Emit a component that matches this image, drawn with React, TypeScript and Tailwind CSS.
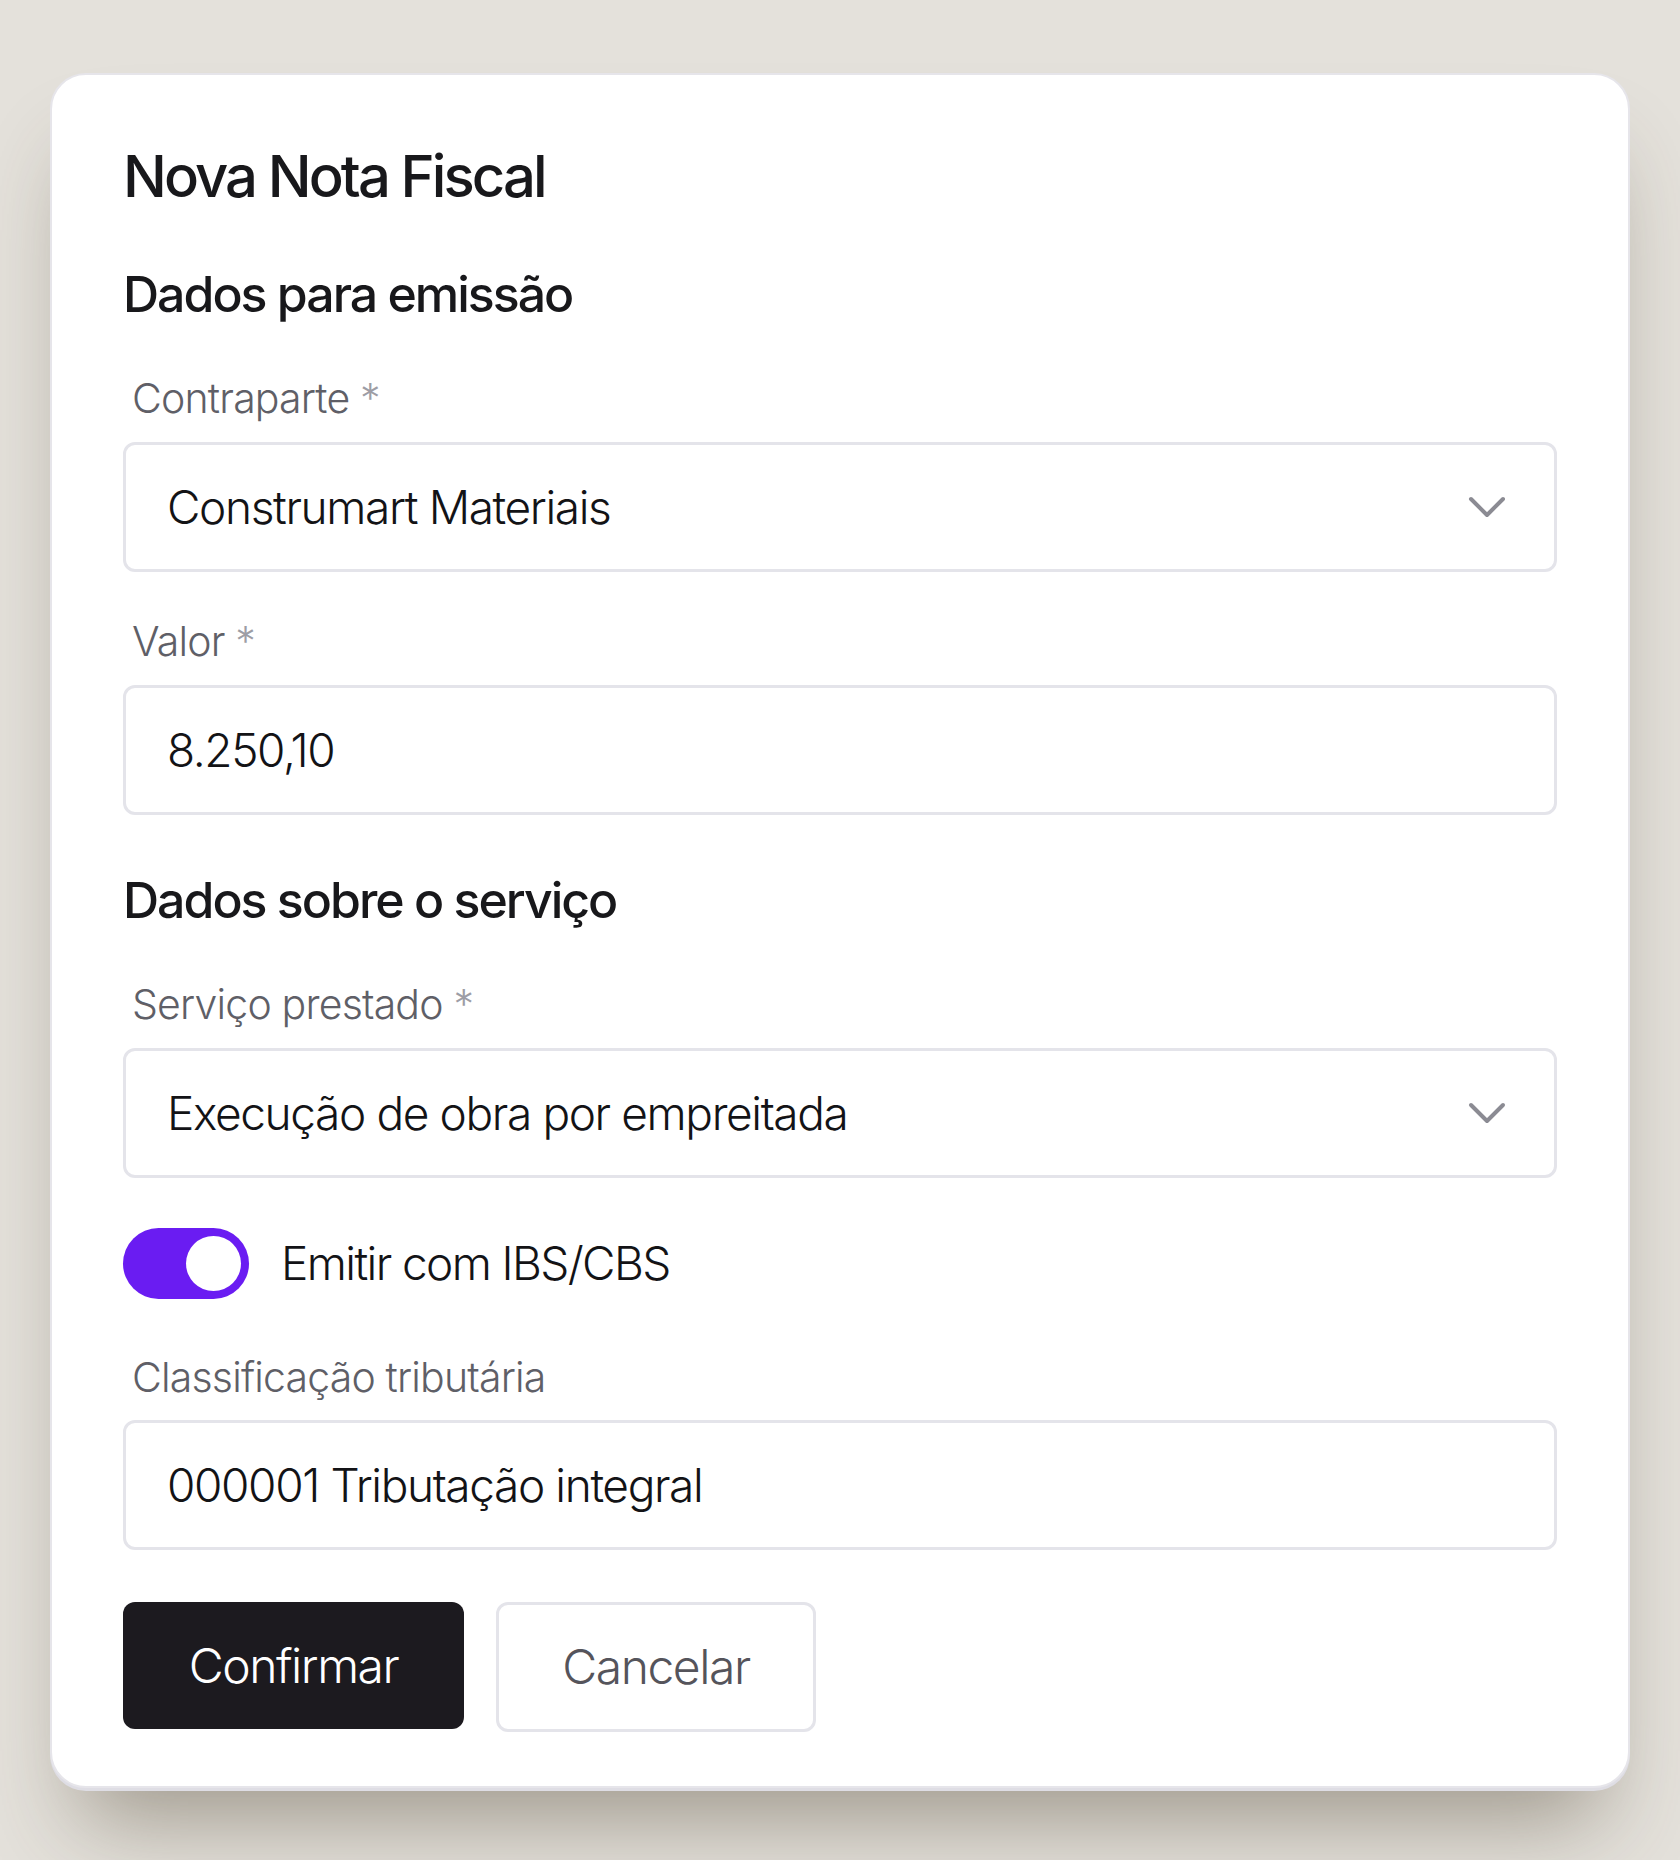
import React from "react";

function Chevron() {
  return (
    <svg width="64" height="64" viewBox="0 0 24 24" fill="none" stroke="#8b8b93" strokeWidth="1.5" strokeLinecap="round" strokeLinejoin="round">
      <path d="m6 9 6 6 6-6" />
    </svg>
  );
}

function Label({ text, required }: { text: string; required?: boolean }) {
  return (
    <div className="pl-[9px] text-[41px] leading-[48px] tracking-[-0.02em] text-[#5f5f67] font-light">
      {text}
      {required && <span className="text-[#9d9da5]"> *</span>}
    </div>
  );
}

function Field({ value, select }: { value: string; select?: boolean }) {
  return (
    <div className="h-[130px] rounded-[12px] border-[3px] border-[#e4e4ea] bg-white flex items-center justify-between pl-[41px] pr-[35px]">
      <span className="text-[46px] font-light tracking-[-0.03em] text-[#131316]">{value}</span>
      {select && <Chevron />}
    </div>
  );
}

export default function App() {
  return (
    <div
      className="w-[1680px] h-[1860px] bg-[#e4e1db] pt-[73px] pl-[50px]"
      style={{ fontFamily: "Inter, 'Noto Sans', sans-serif" }}
    >
      <div className="w-[1580px] h-[1715px] rounded-[36px] bg-white border-2 border-[#e6e5ea] shadow-[0_3px_0_#dedde4,0_60px_90px_-30px_rgba(70,60,40,0.45)] px-[71px] pt-[66px] flex flex-col">
        <h1 className="text-[58px] leading-[70px] font-medium tracking-[-0.05em] text-[#18181b]">Nova Nota Fiscal</h1>
        <h2 className="mt-[55px] text-[50px] leading-[56px] font-medium tracking-[-0.04em] text-[#18181b]">Dados para emissão</h2>
        <div className="mt-[52px]"><Label text="Contraparte" required /></div>
        <div className="mt-[20px]"><Field value="Construmart Materiais" select /></div>
        <div className="mt-[45px]"><Label text="Valor" required /></div>
        <div className="mt-[20px]"><Field value="8.250,10" /></div>
        <h2 className="mt-[57px] text-[50px] leading-[56px] font-medium tracking-[-0.04em] text-[#18181b]">Dados sobre o serviço</h2>
        <div className="mt-[52px]"><Label text="Serviço prestado" required /></div>
        <div className="mt-[20px]"><Field value="Execução de obra por empreitada" select /></div>
        <div className="mt-[50px] flex items-center gap-[32px]">
          <div className="w-[126px] h-[71px] rounded-full bg-[#6a1cf2] flex items-center justify-end pr-[8px]">
            <div className="w-[55px] h-[55px] rounded-full bg-white" />
          </div>
          <span className="text-[46px] font-light tracking-[-0.035em] text-[#131316]">Emitir com IBS/CBS</span>
        </div>
        <div className="mt-[54px]"><Label text="Classificação tributária" /></div>
        <div className="mt-[19px]"><Field value="000001 Tributação integral" /></div>
        <div className="mt-[52px] flex items-start gap-[32px]">
          <button className="w-[341px] h-[127px] rounded-[12px] bg-[#1c1a1f] text-white text-[48px] font-light tracking-[-0.03em]">Confirmar</button>
          <button className="w-[320px] h-[130px] rounded-[12px] border-[3px] border-[#e4e4ea] bg-white text-[#55545b] text-[48px] font-light tracking-[-0.03em]">Cancelar</button>
        </div>
      </div>
    </div>
  );
}
